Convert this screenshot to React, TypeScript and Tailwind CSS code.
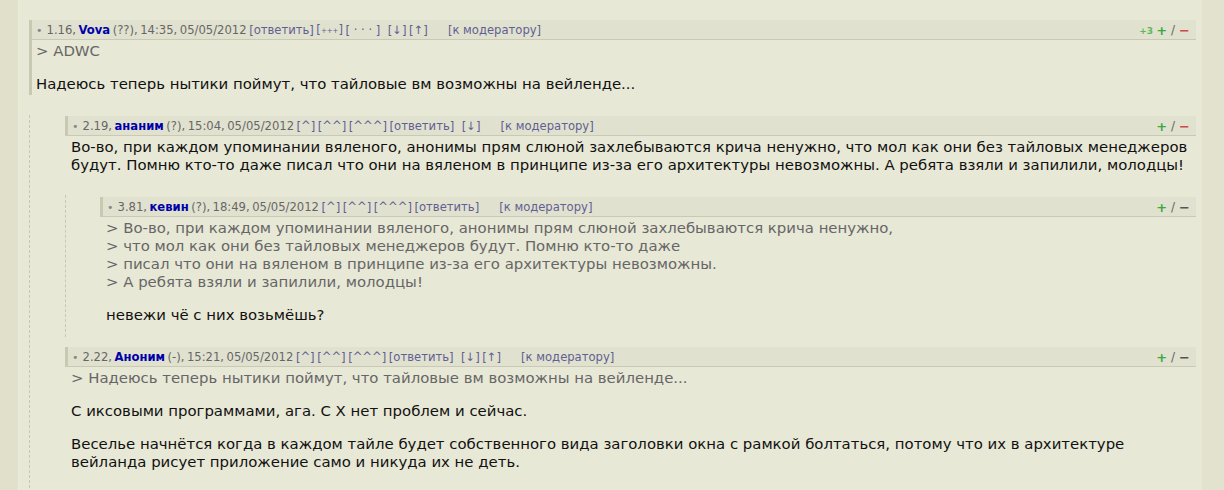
import React from "react";

const L = ({ children }: { children: React.ReactNode }) => (
  <span className="text-[#5f5f93]">{children}</span>
);

function Header({
  num,
  nick,
  meta,
  links,
  plus3,
  redMinus,
}: {
  num: string;
  nick: string;
  meta: string;
  links: React.ReactNode;
  plus3?: boolean;
  redMinus?: boolean;
}) {
  return (
    <div className="flex items-center h-[20px] pt-[2px] bg-[#e1e1cf] border-b border-[#c9c9b6] border-l-[3px] border-l-[#c9c9b3] pl-[4px] pr-[6px] text-[11.6px] leading-[17px] whitespace-nowrap">
      <div className="flex-1 flex items-center text-[#666] [word-spacing:-1.2px]">
        <span className="text-[#888] text-[11px] mr-[4px]">•</span>
        <span>{num},&nbsp;</span>
        <span className="font-bold text-[#0000a8]">{nick}</span>
        <span>&nbsp;{meta}&nbsp;</span>
        {links}
      </div>
      <div className="flex items-center">
        {plus3 && <span className="text-[9px] font-bold text-[#5cb85c] mt-[2px] mr-[3px]">+3</span>}
        <span className="text-[13px] font-bold text-[#3da83d] mr-[4px]">+</span>
        <span className="text-[12px] text-[#666] mr-[4px]">/</span>
        <span className={"text-[13px] font-bold " + (redMinus ? "text-[#d04a4a]" : "text-[#555]")}>−</span>
      </div>
    </div>
  );
}

const Mod = () => <span className="ml-[20px] [word-spacing:0px]"><L>[к модератору]</L></span>;

export default function App() {
  return (
    <div
      className="flex min-h-[490px] h-[490px] overflow-hidden bg-[#e8e8d6] text-[#111]"
      style={{ fontFamily: "'DejaVu Sans', sans-serif" }}
    >
      <div className="w-[19px] shrink-0 bg-[#e0e0cb] border-r border-[#ebebd9]" />
      <div className="flex-1 pl-[10px] pr-[6px] pt-[20px]">
        {/* Comment 1 */}
        <div className="border-l-[3px] border-[#c9c9b3]">
          <div className="-ml-[3px]">
            <Header
              num="1.16"
              nick="Vova"
              meta="(??), 14:35, 05/05/2012"
              plus3
              redMinus
              links={
                <>
                  <L>[ответить]</L>&nbsp;
                  <L>
                    [<span className="text-[7px]">+++</span>]
                  </L>
                  &nbsp;<span className="[word-spacing:0px]"><L>[ · · · ]</L></span>&nbsp;&nbsp;&nbsp;
                  <L>[↓]</L>&nbsp;<L>[↑]</L>
                  <Mod />
                </>
              }
            />
          </div>
          <div className="pl-[4px] pt-[2px] pb-[2px] text-[14.9px] leading-[18px]">
            <p className="text-[#666] mb-[15px]">&gt; ADWC</p>
            <p>Надеюсь теперь нытики поймут, что тайловые вм возможны на вейленде...</p>
          </div>
        </div>

        {/* Replies to 1 */}
        <div className="mt-[20px] pt-[1px] border-l border-dashed border-[#c8c8b2] pl-[35px]">
          {/* Comment 2 */}
          <div>
            <Header
              num="2.19"
              nick="ананим"
              meta="(?), 15:04, 05/05/2012"
              redMinus
              links={
                <>
                  <L>[^]</L>&nbsp;<L>[^^]</L>&nbsp;<L>[^^^]</L>&nbsp;<L>[ответить]</L>
                  &nbsp;&nbsp;&nbsp;<L>[↓]</L>
                  <Mod />
                </>
              }
            />
            <div className="pl-[6px] pt-[2px] pb-[2px] text-[14.9px] leading-[18px]">
              <p>
                Во-во, при каждом упоминании вяленого, анонимы прям слюной захлебываются крича ненужно, что мол как они без тайловых менеджеров будут. Помню кто-то даже писал что они на вяленом в принципе из-за его архитектуры невозможны. А ребята взяли и запилили, молодцы!
              </p>
            </div>
            {/* Replies to 2 */}
            <div className="mt-[19px] pt-[2px] pb-[11px] border-l border-dashed border-[#c8c8b2] pl-[34px]">
              <Header
                num="3.81"
                nick="кевин"
                meta="(?), 18:49, 05/05/2012"
                links={
                  <>
                    <L>[^]</L>&nbsp;<L>[^^]</L>&nbsp;<L>[^^^]</L>&nbsp;<L>[ответить]</L>
                    <Mod />
                  </>
                }
              />
              <div className="pl-[6px] pt-[2px] pb-[2px] text-[14.9px] leading-[18px]">
                <p className="text-[#666] mb-[15px]">
                  &gt; Во-во, при каждом упоминании вяленого, анонимы прям слюной захлебываются крича ненужно,
                  <br />
                  &gt; что мол как они без тайловых менеджеров будут. Помню кто-то даже
                  <br />
                  &gt; писал что они на вяленом в принципе из-за его архитектуры невозможны.
                  <br />
                  &gt; А ребята взяли и запилили, молодцы!
                </p>
                <p>невежи чё с них возьмёшь?</p>
              </div>
            </div>
          </div>

          {/* Comment 4 */}
          <div className="mt-[10px]">
            <Header
              num="2.22"
              nick="Аноним"
              meta="(-), 15:21, 05/05/2012"
              links={
                <>
                  <L>[^]</L>&nbsp;<L>[^^]</L>&nbsp;<L>[^^^]</L>&nbsp;<L>[ответить]</L>
                  &nbsp;&nbsp;&nbsp;<L>[↓]</L>&nbsp;<L>[↑]</L>
                  <Mod />
                </>
              }
            />
            <div className="pl-[6px] pt-[2px] pb-[2px] text-[14.9px] leading-[18px]">
              <p className="text-[#666] mb-[15px]">
                &gt; Надеюсь теперь нытики поймут, что тайловые вм возможны на вейленде...
              </p>
              <p className="mb-[15px]">С иксовыми программами, ага. С X нет проблем и сейчас.</p>
              <p>
                Веселье начнётся когда в каждом тайле будет собственного вида заголовки окна с рамкой болтаться, потому что их в архитектуре вейланда рисует приложение само и никуда их не деть.
              </p>
            </div>
          </div>
          <div className="h-[40px]" />
        </div>
      </div>
      <div className="w-[22px] shrink-0 bg-[#e2e2cf]" />
    </div>
  );
}
